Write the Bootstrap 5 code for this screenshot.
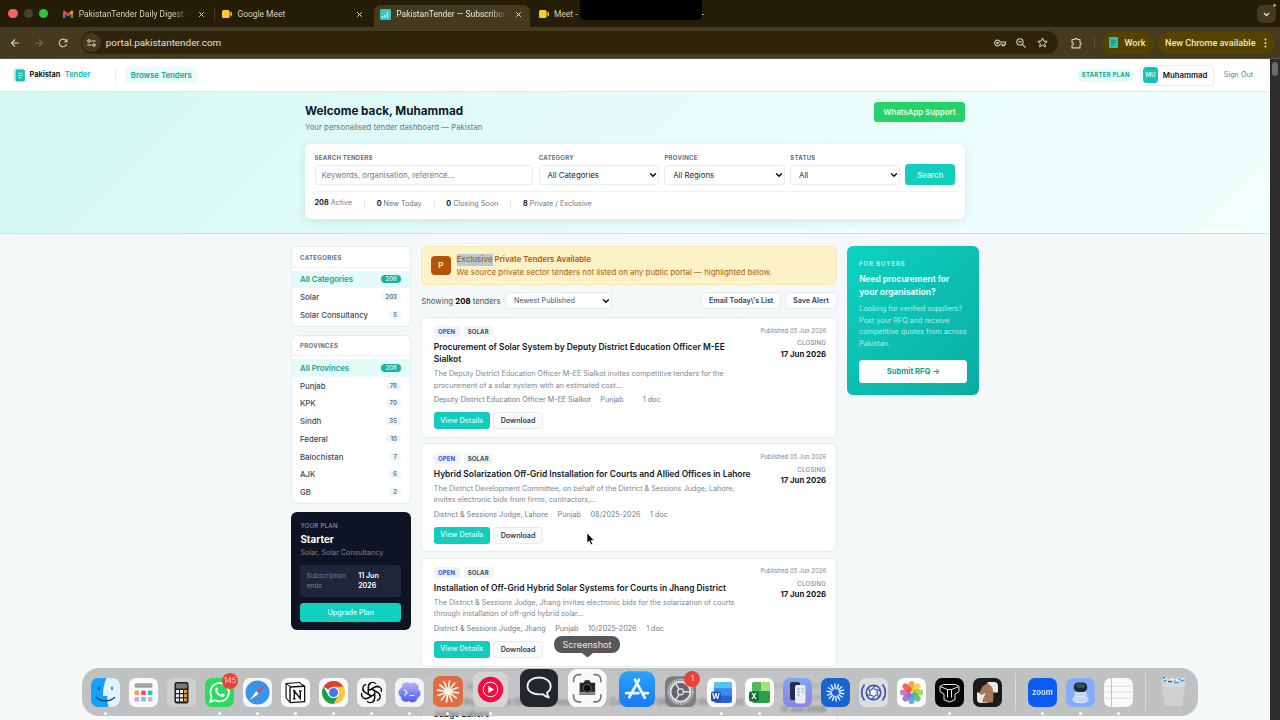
<!DOCTYPE html>
<html lang="en">

<head>
  <meta charset="utf-8">
  <meta name="viewport" content="width=device-width">
  <title>PakistanTender — Subscriber Portal</title>
  <link href="https://cdn.jsdelivr.net/npm/bootstrap@5.3.2/dist/css/bootstrap.min.css" rel="stylesheet">
  <script src="https://cdn.jsdelivr.net/npm/bootstrap@5.3.2/dist/js/bootstrap.bundle.min.js"></script>
  <style>
    body { width: 1280px; height: 720px; overflow: hidden; font-family: Inter, "Liberation Sans", sans-serif; font-size: 7.8px; line-height: 10px; color: #0f172a; background: #f4f8f8; }
    svg { display: block; flex: none; }
    button, input, select { font-family: inherit; }

    /* browser */
    .tabstrip { height: 27px; background: #251d07; font-family: Roboto, sans-serif; font-size: 8.45px; color: #d8cfb8; }
    .lights { width: 56px; padding-left: 8.3px; gap: 6px; }
    .lights i { width: 9.4px; height: 9.4px; border-radius: 50%; }
    .light-close { background: #fe5f58; }
    .light-min { background: #4c422c; }
    .light-max { background: #2bc441; }
    .tab { height: 22px; margin-top: 5px; padding-bottom: 4px; }
    .tab-a { width: 158px; padding-left: 7.3px; }
    .tab-b { width: 160px; padding-left: 6.9px; border-left: 1px solid #463b1e; height: 13px; margin-top: 7.5px; padding-bottom: 0; }
    .tab-c { width: 156px; padding-left: 5.8px; background: #443a20; border-radius: 6px 6px 0 0; color: #eee6d2; }
    .tab-d { padding-left: 8.5px; }
    .tab-text { width: 111px; margin-left: 5.5px; overflow: hidden; white-space: nowrap; }
    .tab-fade { -webkit-mask-image: linear-gradient(90deg, #000 85%, transparent); mask-image: linear-gradient(90deg, #000 85%, transparent); }
    .new-tab { margin-left: 32px; }
    .notch { left: 580px; top: 0; width: 121.5px; height: 20px; background: #000; border-radius: 0 0 5px 5px; }
    .tab-menu { width: 19px; height: 18px; margin: 5px 4px 0 auto; border-radius: 6px; background: #443a20; }
    .toolbar { height: 32px; background: #443a20; font-family: Roboto, sans-serif; border-bottom: 1px solid #5d5544; color: #e9e1cb; }
    .nav-icons { width: 81px; padding-left: 10.3px; gap: 14px; }
    .omnibox { width: 977px; height: 22.5px; border-radius: 12px; background: #2d240b; padding: 0 10px 0 1.3px; font-size: 9.88px; }
    .tune { width: 19px; height: 19px; border-radius: 50%; background: #443a20; margin-right: 4.5px; }
    .loupe { margin: 0 11.5px 0 2px; }
    .puzzle { margin: 0 12px 0 13px; }
    .tool-sep { width: 1px; height: 12px; background: #5b5136; margin-right: 6.5px; }
    .chip { height: 22px; border-radius: 11px; background: #544200; font-size: 9.08px; font-weight: 500; color: #f4e7b5; }
    .chip-work { width: 52px; padding-left: 7.5px; gap: 6.5px; }
    .chip-new { width: 117px; margin-left: 4px; padding-left: 7.5px; }

    /* page */
    .page { width: 1270px; height: 661px; overflow: hidden; }
    .scroller { width: 10px; height: 661px; background: #2c2c2d; padding: 3px 2px; }
    .scroller div { width: 6px; height: 14px; border-radius: 3px; background: #6c6c6c; }
    .topnav { height: 33px; padding: 0 17px 0 13px; background: #fff; border-bottom: 1px solid #dcefec; }
    .brand { font-size: 7.35px; font-weight: 700; gap: 4.5px; }
    .brand-sep { width: 1px; height: 13px; background: #e8eeee; margin-left: 24.5px; }
    .teal { color: #13c2b3; }
    .browse { margin-left: 9.5px; padding: 3.3px 5.7px; border-radius: 4px; background: #e8fcf9; color: #12a594; font-weight: 600; }
    .plan-pill { padding: 1.5px 3.8px; border-radius: 6px; background: #e6fbf8; color: #0ea596; font-size: 6px; font-weight: 700; letter-spacing: .24px; }
    .user { height: 21px; margin: 0 9.5px 0 6px; padding: 0 6px 0 2.2px; gap: 4.5px; border: 1px solid #e8eeed; border-radius: 4px; font-weight: 600; }
    .avatar { width: 15.5px; height: 15.5px; border-radius: 3.5px; background: #14c4b5; color: #c6f5f0; font-size: 6px; font-weight: 700; }
    .muted { color: #6b7787; }
    .sign-out { font-size: 7.2px; }
    .hero { height: 142px; padding-top: 10px; background: linear-gradient(135deg, #d2f8f1 0%, #e8fcfa 50%, #f1fffd 100%); border-bottom: 1px solid #bbe9e4; }
    .hero-in { width: 660px; }
    .hero h1 { font-size: 11.7px; font-weight: 700; line-height: 14px; margin: 2px 0 3.6px; }
    .wa { width: 91px; height: 20px; border-radius: 3.6px; background: #25d366; color: #e9fff1; font-weight: 600; }
    .search-box { height: 74.8px; margin-top: 12.4px; padding: 9px 9.6px 0; background: #fff; border-radius: 6px; box-shadow: 0 3px 10px rgba(13, 110, 100, .12); }
    .search-row { gap: 5.2px; }
    .w-key { width: 219px; }
    .w-cat { width: 120.7px; }
    .w-stat { width: 109.5px; }
    .f-label { display: block; font-size: 6px; font-weight: 700; letter-spacing: .27px; line-height: 10px; color: #64707f; margin-bottom: 2.4px; }
    .field { height: 20px; min-height: 0; padding: 0 6px; border: 1px solid #e7eced; border-radius: 3.6px; font-size: 7.8px; line-height: 18px; color: #1e293b; }
    .field::placeholder { color: #757b85; }
    .form-select.field { padding-left: 7.8px; background-image: url("data:image/svg+xml,%3csvg xmlns='http://www.w3.org/2000/svg' viewBox='0 0 16 16'%3e%3cpath fill='none' stroke='%23111' stroke-linecap='round' stroke-width='3' d='M3 5.500l5 5 5-5'/%3e%3c/svg%3e"); background-size: 8px 8px; background-position: right 1px center; }
    .go { width: 50.6px; height: 21.5px; border-radius: 3.6px; background: #12cebf; color: #c9f9f4; font-weight: 600; }
    .stats { height: 23px; margin-top: 6px; border-top: 1px solid #eef2f2; font-size: 7.2px; color: #6b7787; }
    .stats span + span { border-left: 1px solid #e2e8e8; margin-left: 12.1px; padding-left: 11.6px; line-height: 9px; }
    .stats b { color: #0f172a; }

    .layout { width: 688px; margin-top: 12px; margin-left: 291px; gap: 10.7px; }
    .side { width: 119.8px; gap: 8px; }
    .filter { background: #fff; border: 1px solid #e6eded; border-radius: 6px; padding-bottom: 2px; overflow: hidden; }
    .filter h6 { height: 20.6px; margin: 0 0 3px; padding: 5.5px 8px; border-bottom: 1px solid #ebf0f0; font-size: 6px; font-weight: 700; line-height: 9px; letter-spacing: .36px; color: #64707f; }
    .f-row { height: 17.7px; padding: 0 8.6px 0 8px; font-weight: 500; color: #3c4858; }
    .f-row em { font-style: normal; font-size: 6px; font-weight: 600; line-height: 8px; padding: 0 4px; border-radius: 5px; background: #edf6f5; color: #627382; }
    .f-row.on { background: #e4fbf8; color: #14a294; font-weight: 600; }
    .f-row.on em { background: #16b3a4; color: #c4f3ee; }
    .plan { height: 118.5px; padding: 9px 9.4px 0; border-radius: 6px; background: #0f1424; color: #7a8294; }
    .plan-cap { font-size: 6px; line-height: 9px; font-weight: 600; letter-spacing: .3px; }
    .plan-name { font-size: 9.87px; line-height: 18.5px; }
    .plan-cats { font-size: 7.2px; line-height: 9px; }
    .plan-end { height: 32px; margin: 8px 0 6px; padding: 0 6.3px; border-radius: 3.6px; background: #20263a; font-size: 6.6px; line-height: 10.2px; }
    .plan-end-l { width: 51.5px; }
    .plan-end-r { font-size: 7.1px; line-height: 10.5px; }
    .upgrade { width: 100%; height: 18.6px; border-radius: 3.6px; background: #10d0c1; color: #d5fbf7; font-size: 7.2px; font-weight: 600; }

    .feed { width: 415.3px; }
    .banner { height: 39px; padding: 0 9px; gap: 6px; border: 1px solid #fbe7ae; border-radius: 6px; background: #fdf1c8; color: #b25a12; font-size: 7.87px; line-height: 12.5px; }
    .banner-p { width: 19.4px; height: 19.4px; border-radius: 4px; background: #b45309; color: #fde5b8; font-size: 8px; font-weight: 700; }
    .sel { display: inline-block; background: #b7c9d3; color: #a3693f; line-height: 11.5px; }
    .tools { height: 17px; margin: 7.2px 0 8px; color: #475569; }
    .tools .field { height: 17px; width: 107px; margin-left: 4.5px; font-size: 7.2px; line-height: 15px; color: #475569; }
    .ghost { height: 17px; border: 1px solid #e6ecee; border-radius: 3.6px; background: #fff; color: #334155; font-size: 7.2px; font-weight: 600; padding: 0 6.8px; line-height: 15px; }
    .ghost + .ghost { margin-left: 4px; }
    .tender { padding: 8.2px 9.4px 7.8px 11.6px; margin-bottom: 5.3px; gap: 9px; background: #fff; border: 1px solid #e6eded; border-radius: 6px; }
    .tender-main { width: 318px; }
    .tags { gap: 4px; }
    .tag { height: 11px; padding: 0 4.2px; border-radius: 2.5px; font-size: 6px; font-weight: 700; line-height: 11px; letter-spacing: .15px; background: #eef6f6; color: #3f4f5c; }
    .tag-open { background: #eef3fe; color: #3450d0; }
    .tender h2 { font-size: 8.41px; font-weight: 600; line-height: 12px; margin: 4px 0 3px; }
    .desc { font-size: 7.2px; line-height: 11.5px; color: #7b8694; margin-bottom: 4px; }
    .meta { height: 10px; gap: 9.6px; font-size: 7.2px; color: #6f7a88; margin-bottom: 7px; white-space: nowrap; }
    .acts { gap: 3.5px; }
    .view { width: 56px; height: 17px; border-radius: 3px; background: #14ccbd; color: #c9f7f2; font-size: 7.2px; font-weight: 600; }
    .dl { width: 49.5px; padding: 0; margin: 0; background: #f9fbfb; }
    .when { margin-top: -.6px; font-size: 6px; line-height: 9px; color: #7b8694; white-space: nowrap; }
    .closing { margin: 3.7px 0 1.3px; letter-spacing: .3px; font-weight: 500; }
    .when b { display: block; font-size: 7.75px; line-height: 10px; color: #0f172a; }

    .rfq { width: 131.8px; height: 148.5px; padding: 12.5px 12px 0; border-radius: 6px; background: linear-gradient(135deg, #0ed2c2, #0aada0); color: #b2efe9; font-size: 7.2px; line-height: 11.5px; }
    .rfq-cap { font-size: 6px; line-height: 9px; font-weight: 700; letter-spacing: .85px; }
    .rfq h3 { font-size: 8.4px; font-weight: 700; line-height: 12.8px; color: #e3fffc; margin: 5.4px 0 5px; }
    .rfq button { width: 108px; height: 23px; margin-top: 10.4px; border-radius: 3.6px; background: #fff; color: #0fa294; font-size: 7.7px; font-weight: 700; }
    .bare { border: 0; padding: 0; }

    /* desktop overlays */
    .pointer { left: 586px; top: 532px; }
    .dock { left: 82px; top: 668px; width: 1116px; height: 48px; padding: 0 4.7px 1.500px; border-radius: 17px; background: rgba(166, 168, 167, .68); backdrop-filter: blur(1.6px); }
    .slot { width: 38px; flex: none; }
    .slot::after { content: ""; width: 3px; height: 3px; margin-top: 4.3px; border-radius: 50%; }
    .live::after { background: #fff; }
    .w38 { width: 38.4px; }
    .w47 { width: 47.8px; }
    .w50 { width: 50px; }
    .w41 { width: 41px; }
    .w40 { width: 39.5px; }
    .rule { width: 1px; height: 38px; margin: 0 7.8px 4px; background: #d9dbda; }
    .note-dot { min-width: 16px; height: 16px; border-radius: 8px; background: #ea4238; color: #ffd9d6; font-size: 7.4px; top: -5px; right: -4px; }
    .tip { left: 554px; top: 636px; width: 66px; height: 17px; border-radius: 8px; background: #575757; color: #e6e6e6; font-size: 9.12px; }
    .tip svg { left: 28px; top: 17px; }
  </style>
</head>

<body>
  <div class="tabstrip d-flex position-relative">
    <div class="lights d-flex align-items-center"><i class="light-close"></i><i class="light-min"></i><i class="light-max"></i></div>
    <div class="tab tab-a d-flex align-items-center">
      <svg width="10" height="8" viewBox="0 0 10 8"><path d="M0 1v7h2.300V3.400z" fill="#4285f4"/><path d="M10 1v7H7.700V3.400z" fill="#34a853"/><path d="M0 1.200 1.200.300 5 3.200 8.800.3 10 1.200V3L5 6.400 0 3z" fill="#ea4335"/><path d="M7.700 1.200 10 1v2L7.700 4.600z" fill="#fbbc04"/></svg>
      <div class="tab-text tab-fade">PakistanTender Daily Digest -</div>
      <svg class="ms-2" width="7" height="7" viewBox="0 0 7 7" stroke="#e4dcc6" stroke-width="1"><path d="M1.200 1.200l4.600 4.600M5.800 1.200 1.200 5.800"/></svg>
    </div>
    <div class="tab tab-b d-flex align-items-center">
      <svg width="10" height="8" viewBox="0 0 10 8"><rect width="7.600" height="8" rx="1.500" fill="#fdc92c"/><path d="M7 4 10 1.300v5.400z" fill="#e8a400"/></svg>
      <div class="tab-text">Google Meet</div>
      <svg class="ms-2" width="7" height="7" viewBox="0 0 7 7" stroke="#e4dcc6" stroke-width="1"><path d="M1.200 1.200l4.600 4.600M5.800 1.200 1.200 5.800"/></svg>
    </div>
    <div class="tab tab-c d-flex align-items-center">
      <svg width="11" height="11" viewBox="0 0 11 11"><rect width="11" height="11" rx="1.500" fill="#39c5bd"/><path d="M2.500 9V7M5 9V5.500M7.500 9V3" stroke="#a5ebe4" stroke-width="1.600"/></svg>
      <div class="tab-text tab-fade">PakistanTender — Subscriber</div>
      <svg class="ms-2" width="7" height="7" viewBox="0 0 7 7" stroke="#f2ead6" stroke-width="1"><path d="M1.200 1.200l4.600 4.600M5.800 1.200 1.200 5.800"/></svg>
    </div>
    <div class="tab tab-d d-flex align-items-center">
      <svg width="10" height="8" viewBox="0 0 10 8"><rect width="7.600" height="8" rx="1.500" fill="#fdc92c"/><path d="M7 4 10 1.300v5.400z" fill="#e8a400"/></svg>
      <div class="tab-text">Meet -</div>
      <svg class="new-tab" width="7" height="7" viewBox="0 0 7 7" stroke="#d8cfb8" stroke-width="1"><path d="M0 3.500h6.500M3.500.3v6.400"/></svg>
    </div>
    <div class="notch position-absolute"></div>
    <div class="tab-menu d-flex align-items-center justify-content-center">
      <svg width="7" height="5" viewBox="0 0 7 5" fill="none" stroke="#e9e1cb" stroke-width="1.300"><path d="M1 1l2.500 2.500L6 1"/></svg>
    </div>
    <svg class="position-absolute end-0 top-0" width="8" height="8" viewBox="0 0 8 8"><circle cx="2.500" cy="5.300" r="1.500" fill="#f0913a"/></svg>
  </div>

  <div class="toolbar d-flex align-items-center">
    <div class="nav-icons d-flex">
      <svg width="10" height="10" viewBox="0 0 10 10" fill="none" stroke="#d8cfb8" stroke-width="1.100"><path d="M9 5H1.500M5 1.500 1.500 5 5 8.500"/></svg>
      <svg width="10" height="10" viewBox="0 0 10 10" fill="none" stroke="#756b51" stroke-width="1.100"><path d="M1 5h7.500M5 1.500 8.500 5 5 8.500"/></svg>
      <svg width="10" height="10" viewBox="0 0 10 10" fill="none" stroke="#d8cfb8" stroke-width="1.100"><path d="M8.600 6.100A3.800 3.800 0 1 1 7.900 2.500L8.900 3.600M9 .9v2.900H6.100"/></svg>
    </div>
    <div class="omnibox d-flex align-items-center">
      <div class="tune d-flex align-items-center justify-content-center">
        <svg width="9" height="8" viewBox="0 0 9 8" fill="none" stroke="#e4dcc6" stroke-width="1"><circle cx="2" cy="2" r="1.300"/><path d="M4.600 2H8.500M.5 6h4"/><circle cx="7" cy="6" r="1.300"/></svg>
      </div>
      <div class="me-auto">portal.pakistantender.com</div>
      <svg class="me-2" width="12" height="8" viewBox="0 0 12 8" fill="none" stroke="#d8cfb8" stroke-width="1.100"><path d="M6.200 3H11.500v2.200H10.300V6.600H8.200V5H6.200A2.900 2.900 0 1 1 6.200 3z"/><circle cx="3.500" cy="4" r=".8"/></svg>
      <svg class="loupe" width="10" height="10" viewBox="0 0 10 10" fill="none" stroke="#d8cfb8" stroke-width="1.100"><circle cx="3.900" cy="3.900" r="3.100"/><path d="M6.200 6.200 9.600 9.600M2.400 3.900h3"/></svg>
      <svg width="11" height="11" viewBox="0 0 11 11" fill="none" stroke="#e4dcc6" stroke-width="1"><path d="M5.500 1l1.300 3.100 3.400.3-2.600 2.200.8 3.300-2.900-1.800-2.900 1.800.8-3.300L.8 4.400l3.400-.3z"/></svg>
    </div>
    <svg class="puzzle" width="11" height="12" viewBox="0 0 11 12" fill="none" stroke="#d8cfb8" stroke-width="1.100"><path d="M1 2.500H3.700a1.200 1.200 0 0 1 2.400 0H9v3a1.200 1.200 0 0 1 0 2.400v3H1V8.200a1.400 1.400 0 0 0 0-2.800z"/></svg>
    <div class="tool-sep"></div>
    <div class="chip chip-work d-flex align-items-center">
      <svg width="9" height="11" viewBox="0 0 9 11"><rect width="9" height="11" rx="1" fill="#2cc5a9"/><path d="M2 3.300h5M2 5.500h5M2 7.700h3" stroke="#157c70" stroke-width=".9"/></svg>Work
    </div>
    <div class="chip chip-new d-flex align-items-center">New Chrome available
      <svg class="ms-2" width="3" height="10" viewBox="0 0 3 10" fill="#f4e7b5"><circle cx="1.500" cy="1.500" r="1"/><circle cx="1.500" cy="5" r="1"/><circle cx="1.500" cy="8.500" r="1"/></svg>
    </div>
  </div>

  <div class="d-flex">
    <div class="page">
      <nav class="topnav d-flex align-items-center">
        <div class="brand d-flex align-items-center">
          <svg width="12" height="14" viewBox="0 0 12 14"><rect width="11" height="13" rx="2.500" fill="#d5eef3"/><rect x="2.600" y="1.500" width="9.300" height="12" rx="1.500" fill="#1dc0ae"/><path d="M5 5.200h5M5 7.500h5M5 9.800h3.500" stroke="#c3f5ee" stroke-width=".9"/></svg>
          <span>Pakistan</span><span class="teal">Tender</span>
        </div>
        <div class="brand-sep"></div>
        <a class="browse text-decoration-none" href="#">Browse Tenders</a>
        <span class="plan-pill ms-auto">STARTER PLAN</span>
        <div class="user d-flex align-items-center">
          <span class="avatar d-flex align-items-center justify-content-center">MU</span>Muhammad
        </div>
        <span class="muted sign-out">Sign Out</span>
      </nav>

      <header class="hero">
        <div class="hero-in mx-auto">
          <div class="d-flex justify-content-between align-items-start">
            <div>
              <h1>Welcome back, Muhammad</h1>
              <div class="muted">Your personalised tender dashboard — Pakistan</div>
            </div>
            <button class="wa bare">WhatsApp Support</button>
          </div>
          <div class="search-box">
            <div class="search-row d-flex align-items-end">
              <div class="w-key"><label class="f-label">SEARCH TENDERS</label><input class="field form-control" placeholder="Keywords, organisation, reference..."></div>
              <div class="w-cat"><label class="f-label">CATEGORY</label><select class="field form-select"><option>All Categories</option></select></div>
              <div class="w-cat"><label class="f-label">PROVINCE</label><select class="field form-select"><option>All Regions</option></select></div>
              <div class="w-stat"><label class="f-label">STATUS</label><select class="field form-select"><option>All</option></select></div>
              <button class="go bare">Search</button>
            </div>
            <div class="stats d-flex align-items-center">
              <span><b>208</b> Active</span><span><b>0</b> New Today</span><span><b>0</b> Closing Soon</span><span><b>8</b> Private / Exclusive</span>
            </div>
          </div>
        </div>
      </header>

      <div class="layout d-flex align-items-start">
        <aside class="side d-flex flex-column">
          <div class="filter" id="categories"><h6>CATEGORIES</h6></div>
          <div class="filter" id="provinces"><h6>PROVINCES</h6></div>
          <div class="plan">
            <div class="plan-cap">YOUR PLAN</div>
            <div class="plan-name text-white fw-bold">Starter</div>
            <div class="plan-cats">Solar, Solar Consultancy</div>
            <div class="plan-end d-flex align-items-center">
              <div class="plan-end-l">Subscription<br>ends</div>
              <div class="plan-end-r text-white fw-semibold">11 Jun<br>2026</div>
            </div>
            <button class="upgrade bare">Upgrade Plan</button>
          </div>
        </aside>

        <main class="feed">
          <div class="banner d-flex align-items-center">
            <div class="banner-p d-flex align-items-center justify-content-center">P</div>
            <div class="text-nowrap">
              <div class="fw-semibold"><span class="sel">Exclusive</span> Private Tenders Available</div>
              <div>We source private sector tenders not listed on any public portal — highlighted below.</div>
            </div>
          </div>
          <div class="tools d-flex align-items-center">
            <div class="text-nowrap">Showing <b class="text-black">208</b> tenders</div>
            <select class="field form-select"><option>Newest Published</option></select>
            <button class="ghost ms-auto">Email Today\'s List</button>
            <button class="ghost">Save Alert</button>
          </div>
          <div id="tenders"></div>
        </main>

        <aside class="rfq">
          <div class="rfq-cap">FOR BUYERS</div>
          <h3>Need procurement for<br>your organisation?</h3>
          <div class="text-nowrap">Looking for verified suppliers?<br>Post your RFQ and receive<br>competitive quotes from across<br>Pakistan.</div>
          <button class="bare">Submit RFQ →</button>
        </aside>
      </div>
    </div>
    <div class="scroller"><div></div></div>
  </div>

  <svg class="pointer position-absolute" width="9" height="14" viewBox="0 0 9 14"><path d="M1 .8v10.300l2.300-2.100 1.500 3.800 1.900-.8-1.600-3.600h3z" fill="#000" stroke="#fff" stroke-width=".7"/></svg>

  <div class="dock position-absolute d-flex align-items-end">
    <!-- Finder -->
    <div class="slot live d-flex flex-column align-items-center"><svg width="29" height="29" viewBox="0 0 29 29"><rect width="29" height="29" rx="7" fill="#16a0f7"/><path d="M15.500 0H22a7 7 0 0 1 7 7v15a7 7 0 0 1-7 7h-4.500c-1-3.500-1.300-7-1.200-11H12C12 11 13 5 15.500 0z" fill="#dff2fd"/><path d="M8 9v2.500M21 9v2.500M5.500 19.500c5 4.500 13 4.500 18 0" fill="none" stroke="#0c3a66" stroke-width="1.200" stroke-linecap="round"/></svg></div>
    <!-- Apps -->
    <div class="slot d-flex flex-column align-items-center"><svg width="29" height="29" viewBox="0 0 29 29"><rect width="29" height="29" rx="7" fill="#fafafa"/><rect x="5.500" y="5.300" width="18" height="4.500" rx="1.500" fill="#a5a5a8"/><rect x="5.500" y="12.500" width="4.600" height="4.600" rx="1.200" fill="#f6a04a"/><rect x="12.200" y="12.500" width="4.600" height="4.600" rx="1.200" fill="#ee4d7a"/><rect x="18.900" y="12.500" width="4.600" height="4.600" rx="1.200" fill="#32c794"/><rect x="5.500" y="19" width="4.600" height="4.600" rx="1.200" fill="#d8a0ea"/><rect x="12.200" y="19" width="4.600" height="4.600" rx="1.200" fill="#7fc0dd"/><rect x="18.900" y="19" width="4.600" height="4.600" rx="1.200" fill="#bcbcc2"/></svg></div>
    <!-- Calculator -->
    <div class="slot d-flex flex-column align-items-center"><svg width="29" height="29" viewBox="0 0 29 29"><rect width="29" height="29" rx="7" fill="#cfcfce"/><rect x="7.500" y="4" width="14" height="21.500" rx="2" fill="#202020"/><rect x="9" y="5.500" width="11" height="5" rx="1" fill="#777"/><g fill="#e9e9e9"><rect x="9" y="12" width="3" height="3"/><rect x="13" y="12" width="3" height="3"/><rect x="9" y="16.200" width="3" height="3"/><rect x="13" y="16.200" width="3" height="3"/><rect x="9" y="20.400" width="3" height="3"/><rect x="13" y="20.400" width="3" height="3"/></g><g fill="#f39a2b"><rect x="17" y="12" width="3" height="3"/><rect x="17" y="16.200" width="3" height="3"/><rect x="17" y="20.400" width="3" height="3"/></g></svg></div>
    <!-- WhatsApp -->
    <div class="slot live d-flex flex-column align-items-center"><div class="position-relative"><svg width="29" height="29" viewBox="0 0 29 29"><rect width="29" height="29" rx="7" fill="#2bdc60"/><path d="M5.300 23.700l1.300-5A9.200 9.200 0 1 1 10.200 22.300z" fill="none" stroke="#fff" stroke-width="1.800"/><path d="M10.500 10.300c.8-1.300 1.800-.9 2.100.2.500 1.400.4 1.500-.3 2.400 1 1.900 2.100 2.900 3.900 3.600.9-1 1.100-1.200 2.400-.5 1.300.6 1.500.9.9 2-1 1.400-3.300 1.200-5.600-.2-2.400-1.400-4.600-5-3.400-7.500z" fill="#fff"/></svg><span class="note-dot position-absolute d-flex align-items-center justify-content-center">145</span></div></div>
    <!-- Safari -->
    <div class="slot live d-flex flex-column align-items-center"><svg width="29" height="29" viewBox="0 0 29 29"><rect width="29" height="29" rx="7" fill="#f4f5f6"/><circle cx="14.500" cy="14.500" r="12" fill="#3b94ea"/><path d="M22.500 6.500 13.300 13.300l2.400 2.400z" fill="#ee4050"/><path d="M6.500 22.500 13.300 13.300l2.400 2.400z" fill="#fff"/></svg></div>
    <!-- Notion -->
    <div class="slot live d-flex flex-column align-items-center"><svg width="29" height="29" viewBox="0 0 29 29"><rect width="29" height="29" rx="7" fill="#fbfbfb"/><path d="M4.500 5 18.500 4l5.800 4V24.300L9 25.300 4.500 20z" fill="#151515"/><path d="M6.500 5.900 18 5.100l3.700 2.400L9.500 8.300z" fill="#fff"/><path d="M5.700 6.600l2.600 2V22.800l-2.600-3z" fill="#fff"/><path d="M9.700 9.800 23 9V23.100L9.700 24z" fill="#fff"/><path d="M13.300 20.500V13l6 7.500V13M12 13h2.400M18 13h2.600M12 20.700h2.600" fill="none" stroke="#151515" stroke-width="1.400"/></svg></div>
    <!-- Chrome -->
    <div class="slot live d-flex flex-column align-items-center"><svg width="29" height="29" viewBox="0 0 29 29"><rect width="29" height="29" rx="7" fill="#fafafa"/><path d="M14.500 14.500 4.540 8.750A11.500 11.500 0 0 1 24.460 8.750z" fill="#e33b2e"/><path d="M14.500 8.750H24.460A11.500 11.500 0 0 1 14.500 26L19.500 17.400z" fill="#fcc934"/><path d="M4.540 8.750 9.500 17.400 19.500 17.400 14.500 26A11.500 11.500 0 0 1 4.540 8.750z" fill="#1f9d4d"/><circle cx="14.500" cy="14.500" r="5.800" fill="#fff"/><circle cx="14.500" cy="14.500" r="4.600" fill="#3a7ff0"/></svg></div>
    <!-- ChatGPT -->
    <div class="slot live d-flex flex-column align-items-center"><svg width="29" height="29" viewBox="0 0 29 29"><rect width="29" height="29" rx="7" fill="#f6f6f6"/><g id="knot" fill="none" stroke="#161616" stroke-width="1.300"></g></svg></div>
    <!-- Terminal cloud -->
    <div class="slot live d-flex flex-column align-items-center"><svg width="29" height="29" viewBox="0 0 29 29"><defs><linearGradient id="cl" gradientUnits="userSpaceOnUse" x1="0" y1="4" x2="0" y2="25"><stop stop-color="#b9b3f7"/><stop offset="1" stop-color="#4a58ec"/></linearGradient></defs><rect width="29" height="29" rx="7" fill="#f1f2f8"/><g fill="url(#cl)"><circle cx="12" cy="9.500" r="5.500"/><circle cx="18.500" cy="9.800" r="5"/><circle cx="20.500" cy="15.500" r="5"/><circle cx="17.500" cy="19.500" r="5"/><circle cx="11" cy="19" r="5"/><circle cx="8.500" cy="14.500" r="5"/><circle cx="14.500" cy="14.500" r="7"/></g><path d="M9.500 11.500l2.500 3-2.500 3M14.500 17.500h5" fill="none" stroke="#e9ecff" stroke-width="1.200"/></svg></div>
    <!-- Claude -->
    <div class="slot live w38 d-flex flex-column align-items-center"><svg width="30" height="31" viewBox="0 0 30 31"><rect width="30" height="31" rx="7" fill="#e06c44"/><g class="rays" data-cx="15" data-cy="15.500" data-n="12" data-a="1" data-b="10.500" stroke="#fff3ea" stroke-width="1.700" stroke-linecap="round"></g></svg></div>
    <!-- Music -->
    <div class="slot live w47 d-flex flex-column align-items-center"><svg width="35" height="35" viewBox="0 0 35 35"><rect width="35" height="35" rx="8" fill="#d5d4d4"/><circle cx="17.500" cy="17.500" r="12.700" fill="#f20d3f"/><circle cx="17.500" cy="17.500" r="7.300" fill="none" stroke="#fff" stroke-width="1"/><path d="M15.300 13.800v7.400l5.700-3.700z" fill="#fff"/></svg></div>
    <!-- Chat bubble -->
    <div class="slot w47 d-flex flex-column align-items-center"><svg width="38" height="38" viewBox="0 0 38 38"><rect width="38" height="38" rx="9" fill="#23262b"/><path d="M19 8.500c7 0 11.700 3.700 11.700 8.700 0 3-1.500 5-3.700 6.400.3 2 .8 3.400 1.800 4.900-2.700-.6-4.700-1.800-6-3.300-7.800 1.200-15.300-2-15.300-8C7.500 12.200 12 8.500 19 8.500z" fill="none" stroke="#f2f2f2" stroke-width="1.800" stroke-linejoin="round"/></svg></div>
    <!-- Screenshot -->
    <div class="slot w50 d-flex flex-column align-items-center"><svg width="38.500" height="38.500" viewBox="0 0 38 38"><rect width="38" height="38" rx="9" fill="#f9f9f9"/><path d="M5.500 13V10.500a5 5 0 0 1 5-5H13M25 5.500h2.500a5 5 0 0 1 5 5V13M32.500 25v2.500a5 5 0 0 1-5 5H25M13 32.500h-2.500a5 5 0 0 1-5-5V25" fill="none" stroke="#777" stroke-width="1.600"/><path d="M11.500 13.500h4l1.200-2.300h4.600l1.200 2.300h4.300v11.800H11.500z" fill="#262626"/><path d="M11.500 22.500h15.300v2.800H11.500z" fill="#8a8a8a"/><circle cx="19" cy="19" r="4.500" fill="#555"/><circle cx="19" cy="19" r="3.300" fill="#0d0d0d"/></svg></div>
    <!-- App Store -->
    <div class="slot w47 d-flex flex-column align-items-center"><svg width="36" height="36.500" viewBox="0 0 36 36"><defs><linearGradient id="as" x2="0" y2="1"><stop stop-color="#27a3fb"/><stop offset="1" stop-color="#1a78f2"/></linearGradient></defs><rect width="36" height="36" rx="9" fill="url(#as)"/><path d="M16 8.500 25.800 26.500M20 8.500 10.300 26M7 21.800h12.500M23.500 21.800H29" stroke="#e8f6ff" stroke-width="2.700" stroke-linecap="round"/></svg></div>
    <!-- Settings -->
    <div class="slot w41 d-flex flex-column align-items-center"><div class="position-relative"><svg width="31" height="31.500" viewBox="0 0 31 31"><rect width="31" height="31" rx="7.500" fill="#7e7e82"/><circle cx="15.500" cy="15.500" r="12.300" fill="none" stroke="#d7d7d9" stroke-width="1.500" stroke-dasharray="1.300 1"/><circle cx="15.500" cy="15.500" r="10" fill="#64646a" stroke="#dedee0" stroke-width="2"/><circle cx="15.500" cy="15.500" r="3" fill="none" stroke="#dedee0" stroke-width="1.300"/><path d="M18.500 15.500h6.500M14 12.900 10.700 7.200M14 18.100l-3.300 5.700" stroke="#dedee0" stroke-width="1.500"/></svg><span class="note-dot position-absolute d-flex align-items-center justify-content-center">1</span></div></div>
    <!-- Word -->
    <div class="slot live w40 d-flex flex-column align-items-center"><svg width="29" height="29" viewBox="0 0 29 29"><rect width="29" height="29" rx="7" fill="#fafbfd"/><rect x="7" y="4" width="18" height="21" rx="2.500" fill="#2a62d8"/><path d="M9.500 4H22.500A2.500 2.500 0 0 1 25 6.500V10.500H7v-4A2.500 2.500 0 0 1 9.500 4z" fill="#54c3f6"/><path d="M7 10.500h18v7H7z" fill="#3c8cf0"/><rect x="4" y="13.500" width="10" height="10" rx="2" fill="#1a4fb4"/><text x="9" y="21.200" text-anchor="middle" font-size="7.500" font-weight="700" fill="#fff">W</text></svg></div>
    <!-- Excel -->
    <div class="slot live d-flex flex-column align-items-center"><svg width="29" height="29" viewBox="0 0 29 29"><rect width="29" height="29" rx="7" fill="#fafdfa"/><rect x="7" y="4" width="18" height="21" rx="2.500" fill="#2c9d4b"/><path d="M9.500 4H16v9H7V6.500A2.500 2.500 0 0 1 9.500 4z" fill="#4fbb5e"/><path d="M16 4h6.500A2.500 2.500 0 0 1 25 6.500V13h-9z" fill="#a3e27c"/><rect x="4" y="13.500" width="10" height="10" rx="2" fill="#16703a"/><text x="9" y="21.200" text-anchor="middle" font-size="7.500" font-weight="700" fill="#fff">X</text></svg></div>
    <!-- iPhone mirroring -->
    <div class="slot d-flex flex-column align-items-center"><svg width="29" height="29" viewBox="0 0 29 29"><defs><linearGradient id="ip" x2="0" y2="1"><stop stop-color="#7aa9ef"/><stop offset="1" stop-color="#8a83e6"/></linearGradient></defs><rect width="29" height="29" rx="7" fill="url(#ip)"/><rect x="7" y="4" width="10" height="18" rx="2" fill="#252c4c"/><rect x="12" y="7" width="10.500" height="18.500" rx="2" fill="#e9ecf6"/><path d="M14 11h3M18.500 11H21M14 14h3M18.500 14H21M14 17h3" stroke="#9aa5cc" stroke-width="1.200"/></svg></div>
    <!-- Blue burst -->
    <div class="slot d-flex flex-column align-items-center"><svg width="29" height="29" viewBox="0 0 29 29"><rect width="29" height="29" rx="7" fill="#1763cf"/><g class="rays" data-cx="14.500" data-cy="14.500" data-n="14" data-a="4" data-b="8.500" stroke="#e9f3ff" stroke-width="1.400" stroke-linecap="round"></g></svg></div>
    <!-- Aperture -->
    <div class="slot d-flex flex-column align-items-center"><svg width="29" height="29" viewBox="0 0 29 29"><rect width="29" height="29" rx="7" fill="#dcdee2"/><circle cx="14.500" cy="14.500" r="7.200" fill="#f5f7fb" stroke="#3f55ae" stroke-width="1.700"/><g id="blades" stroke="#3f55ae" stroke-width="1.300"></g><path d="M5.500 6.500a12.500 12.500 0 0 0 0 16M23.500 6.500a12.500 12.500 0 0 1 0 16" fill="none" stroke="#3f55ae" stroke-width="1.700"/></svg></div>
    <!-- Photos -->
    <div class="slot d-flex flex-column align-items-center"><svg width="29" height="29" viewBox="0 0 29 29"><rect width="29" height="29" rx="7" fill="#fcfcfc"/><g id="petals"></g></svg></div>
    <!-- T shield -->
    <div class="slot live d-flex flex-column align-items-center"><svg width="29" height="29" viewBox="0 0 29 29"><rect width="29" height="29" rx="7" fill="#050505"/><path d="M5 8.500 8.500 6.500h12L24 8.500v5l-4 2.700v5.500L14.500 24 9 21.700v-5.500L5 13.500zM5 8.500l7.500 3v8M24 8.500l-7.500 3v8M12.500 11.500h4" fill="none" stroke="#ededed" stroke-width="1" stroke-linejoin="round"/></svg></div>
    <!-- Chess -->
    <div class="slot d-flex flex-column align-items-center"><svg width="29" height="29" viewBox="0 0 29 29"><rect width="29" height="29" rx="7" fill="#1d1b1a"/><path d="M14.500 4H21a4 4 0 0 1 4 4v6.500H14.500zM4 14.500h10.500V25H8a4 4 0 0 1-4-4z" fill="#eceae7"/><path d="M9.500 24.500c0-5 2.500-6 3-9.500-2 1-3.500 2-5 1.500C6.200 16 6.500 14 7.500 12.500c1.300-3.500 3-5.500 6-6.500l.8-2 1.700 2.500c4.500 2 5 8 4 18z" fill="#a47858"/></svg></div>
    <div class="rule"></div>
    <!-- Zoom -->
    <div class="slot live d-flex flex-column align-items-center"><svg width="29" height="29" viewBox="0 0 29 29"><rect width="29" height="29" rx="7" fill="#0b5cf5"/><text x="14.500" y="16.800" text-anchor="middle" font-size="7.800" font-weight="600" fill="#e8f1ff">zoom</text></svg></div>
    <!-- Camera loupe -->
    <div class="slot live d-flex flex-column align-items-center"><svg width="29" height="29" viewBox="0 0 29 29"><rect width="29" height="29" rx="7" fill="#85acf8"/><path d="M9.500 12h10l2.800 10.500c-4 3.500-11.600 3.500-15.600 0z" fill="#bdd7fd"/><ellipse cx="14.500" cy="21.500" rx="7.700" ry="3" fill="none" stroke="#e2eeff"/><rect x="7.800" y="4.500" width="13.400" height="9.500" rx="4.500" fill="#1b2836"/><ellipse cx="14.500" cy="7.800" rx="4.500" ry="2.300" fill="#3b4d60"/></svg></div>
    <!-- Notes -->
    <div class="slot live d-flex flex-column align-items-center"><svg width="29" height="29" viewBox="0 0 29 29"><rect width="29" height="29" rx="7" fill="#fafafa"/><path d="M0 8h29M0 14h29M0 20h29" stroke="#d4d5d9" stroke-width=".8"/><path d="M7.500 0v29" stroke="#eda5ab" stroke-width=".9"/></svg></div>
    <div class="rule"></div>
    <!-- Trash -->
    <div class="slot d-flex flex-column align-items-center"><svg width="29" height="31" viewBox="0 0 29 31"><path d="M2.500 4.500h24L23.500 28a2 2 0 0 1-2 2h-14a2 2 0 0 1-2-2z" fill="#d8dada"/><path d="M3.300 11h22.400L23.500 28a2 2 0 0 1-2 2h-14a2 2 0 0 1-2-2z" fill="#cfd1d1"/><path d="M3 3.500l4-2.500 3 3 3-2.500 3 2 4-3 2 2 3.500-1 .5 4.500H3z" fill="#e8eef0"/><path d="M4 5.500 8 4M19 2l3 2.500M22 5.500l3.500-1.500M15 6.500h5" stroke="#3ba0da" stroke-width="1.500"/><path d="M9 5.500h4M4 2.500l2-1" stroke="#555" stroke-width="1.300"/><path d="M14 5.500l3-1.500" stroke="#e8b44b" stroke-width="1.500"/></svg></div>
  </div>

  <div class="tip position-absolute d-flex align-items-center justify-content-center">Screenshot
    <svg class="position-absolute" width="11" height="5" viewBox="0 0 11 5"><path d="M0 0h11L6.500 3.800a1.500 1.500 0 0 1-2 0z" fill="#575757"/></svg>
  </div>

  <script>
    const categories = [["All Categories", 208], ["Solar", 203], ["Solar Consultancy", 5]]
    const provinces = [["All Provinces", 208], ["Punjab", 78], ["KPK", 70], ["Sindh", 35], ["Federal", 10], ["Balochistan", 7], ["AJK", 6], ["GB", 2]]
    const tenders = [{
        title: "Procurement of Solar System by Deputy District Education Officer M-EE Sialkot",
        desc: "The Deputy District Education Officer M-EE Sialkot invites competitive tenders for the procurement of a solar system with an estimated cost...",
        meta: ["Deputy District Education Officer M-EE Sialkot", "Punjab", "", "1 doc"]
      },
      {
        title: "Hybrid Solarization Off-Grid Installation for Courts and Allied Offices in Lahore",
        desc: "The District Development Committee, on behalf of the District &amp; Sessions Judge, Lahore, invites electronic bids from firms, contractors,...",
        meta: ["District &amp; Sessions Judge, Lahore", "Punjab", "08/2025-2026", "1 doc"]
      },
      {
        title: "Installation of Off-Grid Hybrid Solar Systems for Courts in Jhang District",
        desc: "The District &amp; Sessions Judge, Jhang invites electronic bids for the solarization of courts through installation of off-grid hybrid solar...",
        meta: ["District &amp; Sessions Judge, Jhang", "Punjab", "10/2025-2026", "1 doc"]
      },
      {
        title: "Hybrid Solarization Off-Grid Installation for Courts and Offices of the District Judge Lahore"
      }
    ]

    function fillFilter(id, rows) {
      const box = document.querySelector(id)
      rows.forEach(function (row, i) {
        box.innerHTML += `<div class="f-row d-flex align-items-center justify-content-between ${i === 0 ? "on" : ""}">${row[0]}<em>${row[1]}</em></div>`
      })
    }
    fillFilter("#categories", categories)
    fillFilter("#provinces", provinces)

    function tenderBody(t) {
      if (!t.desc) return ""
      return `<div class="desc">${t.desc}</div>
          <div class="meta d-flex">${t.meta.map(m => `<span>${m}</span>`).join("")}</div>
          <div class="acts d-flex"><button class="view bare">View Details</button><button class="ghost dl">Download</button></div>`
    }

    document.querySelector("#tenders").innerHTML = tenders.map(t => `
      <article class="tender d-flex justify-content-between">
        <div class="tender-main">
          <div class="tags d-flex"><span class="tag tag-open">OPEN</span><span class="tag">SOLAR</span></div>
          <h2>${t.title}</h2>
          ${tenderBody(t)}
        </div>
        <div class="when text-end">Published 05 Jun 2026<div class="closing">CLOSING</div><b>17 Jun 2026</b></div>
      </article>`).join("")

    // radial icon parts
    document.querySelectorAll(".rays").forEach(function (g) {
      const d = g.dataset
      for (let i = 0; i < d.n; i++) {
        g.innerHTML += `<path d="M${+d.cx + +d.a} ${d.cy}H${+d.cx + +d.b}" transform="rotate(${360 / d.n * i + 8} ${d.cx} ${d.cy})"/>`
      }
    })
    const colors = ["#f59b23", "#f4cf2c", "#9ccb3b", "#4fb56b", "#4a9fe0", "#7a6fd0", "#c565b5", "#ee4b45"]
    colors.forEach((c, i) => {
      document.querySelector("#petals").innerHTML += `<rect x="11.500" y="3" width="6" height="10.500" rx="3" fill="${c}" opacity=".85" transform="rotate(${i * 45} 14.500 14.500)"/>`
    })
    for (let i = 0; i < 6; i++) {
      document.querySelector("#knot").innerHTML += `<path d="M11.400 16.300V8.600a4.300 4.300 0 0 1 7.600-2.700M11.400 12.700l6.200-3.600a4.300 4.300 0 0 1 4.300 0" transform="rotate(${i * 60} 14.500 14.500)"/>`
      document.querySelector("#blades").innerHTML += `<path d="M11.500 12.500 16.500 7.600" transform="rotate(${i * 60} 14.500 14.500)"/>`
    }
  </script>
</body>

</html>
